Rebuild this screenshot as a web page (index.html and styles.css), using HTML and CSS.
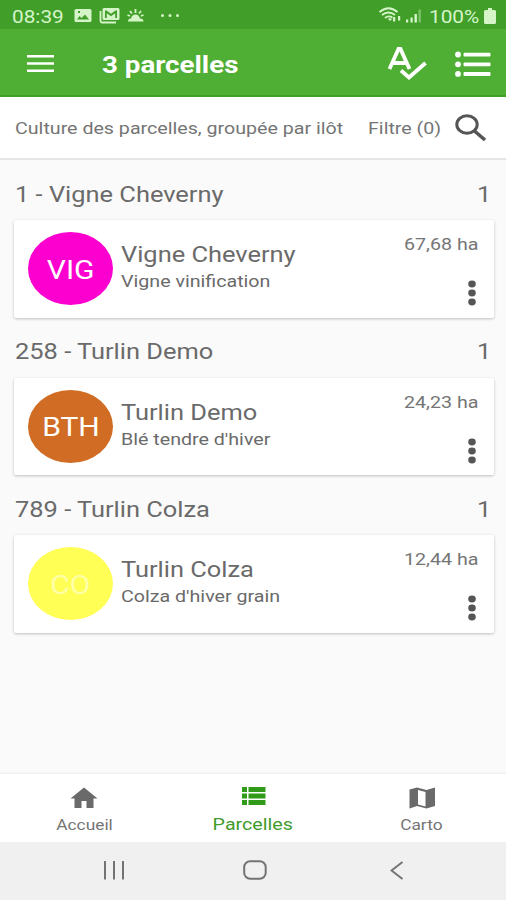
FILE: index.html
```html
<!DOCTYPE html>
<html lang="fr">
<head>
  <meta charset="UTF-8" />
  <meta name="viewport" content="width=device-width, initial-scale=1.0"/>
  <title>Parcelles</title>
  <link rel="stylesheet" href="styles.css">
</head>
<body>
  <div class="status">
    <span class="wide time">08:39</span>
    <svg class="notifs" width="110" height="20" viewBox="0 0 110 20">
      <path fill-rule="evenodd" d="M2 3h14q1.500 0 1.500 1.500v10q0 1.500-1.500 1.500H2q-1.500 0-1.500-1.500v-10Q.5 3 2 3zM3 13.500h12l-4-5-3.500 3.500L5.500 10zM4 5v2h2V5z"/>
      <path fill-rule="evenodd" d="M30 2h14q1.500 0 1.500 1.500v9q0 1.500-1.500 1.500H30q-1.500 0-1.500-1.500v-9Q28.500 2 30 2zM31 4.500V12h1.800V7.200l4.200 3 4.200-3V12H43V4.500h-1.500L37 7.800l-4.500-3.300z"/>
      <path class="line" d="M26.500 5v10q0 1.500 1.500 1.500h14"/>
      <path d="M54 15.500q0-3 3-3 1-4 4.500-4T66 12.500q3.500 0 3.500 3z"/>
      <path class="line" d="M61.500 3v4M56 5l2 2.500M67 5l-2 2.500M53.500 9l2.500 1M69.500 9l-2.500 1"/>
      <circle cx="88.500" cy="9.500" r="1.500"/><circle cx="96" cy="9.500" r="1.500"/><circle cx="103.500" cy="9.500" r="1.500"/>
    </svg>
    <svg class="signal" width="44" height="20" viewBox="0 0 44 20">
      <path class="line" d="M.5 6Q9.500-1.500 18.500 6M3 9q6.500-5 13 0M6 12q3.500-3 7.500-.5"/>
      <path d="M9 13l2-1 2 1-2 2zM14 11h2.200v4.500H14zM19 10h2.200v4.500H19zM27 13.500h2.200v3H27zM31.500 11.500h2.200v5h-2.200zM35.500 8h2.400v8.500h-2.400z"/>
      <path class="dim" d="M39.500 3.500h2.400v13h-2.400z"/>
    </svg>
    <span class="wide percent">100%</span>
    <svg class="battery" width="12" height="16" viewBox="0 0 12 16"><path d="M4 0h4v2h2.500q1.500 0 1.500 1.500v11q0 1.500-1.500 1.500h-9Q0 16 0 14.500v-11Q0 2 1.500 2H4z"/></svg>
  </div>

  <header class="toolbar">
    <svg class="burger" width="27" height="18" viewBox="0 0 27 18"><path d="M0 0h27v2.400H0zM0 7.300h27v2.400H0zM0 14.600h27V17H0z"/></svg>
    <h1 class="wide">3 parcelles</h1>
    <svg class="check" width="40" height="34" viewBox="0 0 40 34">
      <path d="M2.500 23L11.500 3h2l9 20M6 17h13"/>
      <path d="M14 24.500l8 7L38.500 17"/>
    </svg>
    <svg class="bullets" width="36" height="26" viewBox="0 0 36 26">
      <circle cx="3" cy="3.500" r="2.900"/><circle cx="3" cy="13.300" r="2.900"/><circle cx="3" cy="22.900" r="2.900"/>
      <rect x="8.500" y="1.700" width="27" height="3.800" rx="1"/><rect x="8.500" y="11.500" width="27" height="3.800" rx="1"/><rect x="8.500" y="21.100" width="27" height="3.800" rx="1"/>
    </svg>
  </header>

  <div class="filter">
    <span class="wide">Culture des parcelles, groupée par ilôt</span>
    <span class="wide count">Filtre (0)</span>
    <svg width="32" height="28" viewBox="0 0 32 28"><ellipse cx="12" cy="10.500" rx="10.200" ry="8.800"/><path d="M19.500 17L30 26" stroke-width="3.600"/></svg>
  </div>

  <main>
    <section>
      <h2><span class="wide">1 - Vigne Cheverny</span><span class="wide end">1</span></h2>
      <div class="card">
        <div class="badge vig"><span class="wide">VIG</span></div>
        <div class="info">
          <div class="name wide">Vigne Cheverny</div>
          <div class="crop wide">Vigne vinification</div>
        </div>
        <div class="side">
          <div class="area wide end">67,68 ha</div>
          <svg width="8" height="26" viewBox="0 0 8 26"><ellipse cx="4" cy="4" rx="3.800" ry="3.400"/><ellipse cx="4" cy="13" rx="3.800" ry="3.400"/><ellipse cx="4" cy="22" rx="3.800" ry="3.400"/></svg>
        </div>
      </div>
    </section>

    <section>
      <h2><span class="wide">258 - Turlin Demo</span><span class="wide end">1</span></h2>
      <div class="card">
        <div class="badge bth"><span class="wide">BTH</span></div>
        <div class="info">
          <div class="name wide">Turlin Demo</div>
          <div class="crop wide">Blé tendre d'hiver</div>
        </div>
        <div class="side">
          <div class="area wide end">24,23 ha</div>
          <svg width="8" height="26" viewBox="0 0 8 26"><ellipse cx="4" cy="4" rx="3.800" ry="3.400"/><ellipse cx="4" cy="13" rx="3.800" ry="3.400"/><ellipse cx="4" cy="22" rx="3.800" ry="3.400"/></svg>
        </div>
      </div>
    </section>

    <section>
      <h2><span class="wide">789 - Turlin Colza</span><span class="wide end">1</span></h2>
      <div class="card">
        <div class="badge co"><span class="wide">CO</span></div>
        <div class="info">
          <div class="name wide">Turlin Colza</div>
          <div class="crop wide">Colza d'hiver grain</div>
        </div>
        <div class="side">
          <div class="area wide end">12,44 ha</div>
          <svg width="8" height="26" viewBox="0 0 8 26"><ellipse cx="4" cy="4" rx="3.800" ry="3.400"/><ellipse cx="4" cy="13" rx="3.800" ry="3.400"/><ellipse cx="4" cy="22" rx="3.800" ry="3.400"/></svg>
        </div>
      </div>
    </section>
  </main>

  <nav class="tabs">
    <a class="tab">
      <svg width="28" height="22" viewBox="0 0 28 22"><path d="M14 .5L.5 11.500h4V21h7v-7h5v7h7v-9.500h4z"/></svg>
      <span class="wide">Accueil</span>
    </a>
    <a class="tab active">
      <svg width="26" height="22" viewBox="0 0 26 22"><path d="M2 0h5v5H2zM8.500 0h17v5h-17zM2 6.500h5v5H2zM8.500 6.500h17v5h-17zM2 13h5v5H2zM8.500 13h17v5h-17z"/></svg>
      <span class="wide">Parcelles</span>
    </a>
    <a class="tab">
      <svg width="26" height="22" viewBox="0 0 26 22"><path fill-rule="evenodd" d="M.5 2.500L8 .5l9.500 2.500L26 .5v18.500l-8.500 2.500L8 19l-7.500 2.500zM9 3v14.500l7.500 2V5z"/></svg>
      <span class="wide">Carto</span>
    </a>
  </nav>

  <div class="system">
    <svg width="22" height="19" viewBox="0 0 22 19"><path d="M2 0v18.500M11 0v18.500M20 0v18.500"/></svg>
    <svg class="home" width="24" height="20" viewBox="0 0 24 20"><rect x="1.200" y="1.200" width="21.500" height="17.500" rx="6"/></svg>
    <svg width="14" height="19" viewBox="0 0 14 19"><path d="M12.500 1L1.500 9.500l11 8.500"/></svg>
  </div>
</body>
</html>
```

FILE: styles.css
```css
* {
  box-sizing: border-box;
}

body {
  margin: 0;
  height: 900px;
  display: flex;
  flex-direction: column;
  overflow: hidden;
  background: #fafafa;
  color: #6a6a6a;
  font-family: Roboto, sans-serif;
}

svg {
  display: block;
  flex: none;
}

.wide {
  display: inline-block;
  white-space: nowrap;
  transform: scaleX(1.155);
  transform-origin: left center;
}

.end {
  transform-origin: right center;
}

.status {
  height: 29px;
  flex: none;
  display: flex;
  align-items: center;
  padding: 3px 10px 0 12px;
  background: #419f29;
  color: #d5f5c9;
  font-size: 18px;
}

.status svg {
  fill: #d5f5c9;
}

.status .line {
  fill: none;
  stroke: #d5f5c9;
  stroke-width: 1.8;
}

.status .dim {
  opacity: 0.4;
}

.time {
  width: 62px;
}

.signal {
  margin-left: auto;
}

.percent {
  width: 52px;
  margin-left: 6px;
}

.battery {
  margin-left: 3px;
}

.toolbar {
  height: 68px;
  flex: none;
  display: flex;
  align-items: center;
  padding: 2px 15px 0 27px;
  background: #4faf34;
  border-bottom: 2px solid #419f29;
}

.toolbar svg {
  fill: #fff;
}

.burger {
  margin-top: 1px;
}

h1 {
  margin: 4px auto 0 48px;
  color: #fff;
  font-size: 24px;
  font-weight: 700;
}

.toolbar .check {
  margin-right: 28px;
  fill: none;
  stroke: #fff;
  stroke-width: 3.8;
}

.toolbar .bullets {
  margin-top: 1px;
}

.filter {
  height: 63px;
  flex: none;
  display: flex;
  align-items: center;
  padding: 1px 19px 0 15px;
  background: #fff;
  border-bottom: 2px solid #e5e5e5;
  color: #757575;
  font-size: 17px;
}

.count {
  width: 87px;
  margin-left: auto;
}

.filter svg {
  fill: none;
  stroke: #555;
  stroke-width: 3;
}

main {
  flex: 1;
}

h2 {
  height: 60px;
  margin: 0;
  display: flex;
  align-items: center;
  justify-content: space-between;
  padding: 8px 15px 0;
  font-size: 22px;
  font-weight: 400;
}

.card {
  height: 97.5px;
  margin: 0 12px 0 14px;
  padding: 12px 16px 0 14px;
  display: flex;
  background: #fff;
  border-radius: 2px;
  box-shadow: 0 1px 3px rgba(0, 0, 0, 0.24);
}

.badge {
  width: 85px;
  height: 73px;
  display: flex;
  align-items: center;
  justify-content: center;
  padding-top: 2px;
  border-radius: 50%;
  color: #fff;
  font-size: 26px;
}

.badge .wide {
  transform-origin: center;
}

.vig {
  background: #fb00cf;
}

.bth {
  background: #d06c24;
}

.co {
  background: #ffff55;
  color: #ffffa8;
}

.info {
  margin: 9px 0 0 8px;
}

.name {
  display: block;
  font-size: 22px;
  line-height: 28px;
}

.crop {
  display: block;
  font-size: 17px;
  line-height: 25px;
}

.side {
  margin-left: auto;
  display: flex;
  flex-direction: column;
  align-items: flex-end;
}

.area {
  font-size: 17px;
  line-height: 25px;
  color: #757575;
}

.side svg {
  margin: 23px 2px 0 0;
  fill: #555;
}

.tabs {
  height: 68px;
  flex: none;
  display: flex;
  background: #fff;
  box-shadow: 0 -1px 2px rgba(0, 0, 0, 0.05);
}

.tab {
  flex: 1;
  display: flex;
  flex-direction: column;
  align-items: center;
  padding-top: 13px;
  font-size: 15px;
  color: #757575;
}

.tab .wide {
  transform-origin: center;
  line-height: 20px;
  margin-top: 6px;
}

.tab svg {
  fill: #6a6a6a;
}

.tab.active {
  color: #3f9b2b;
  font-size: 17px;
}

.tab.active .wide {
  margin-top: 5px;
}

.tab.active svg {
  fill: #319b19;
}

.system {
  height: 58px;
  flex: none;
  display: flex;
  align-items: center;
  justify-content: space-between;
  padding: 0 102px 2px 103px;
  background: #f0f0f0;
}

.system svg {
  fill: none;
  stroke: #737373;
  stroke-width: 2;
}

.system .home {
  margin-right: 6px;
}
```
